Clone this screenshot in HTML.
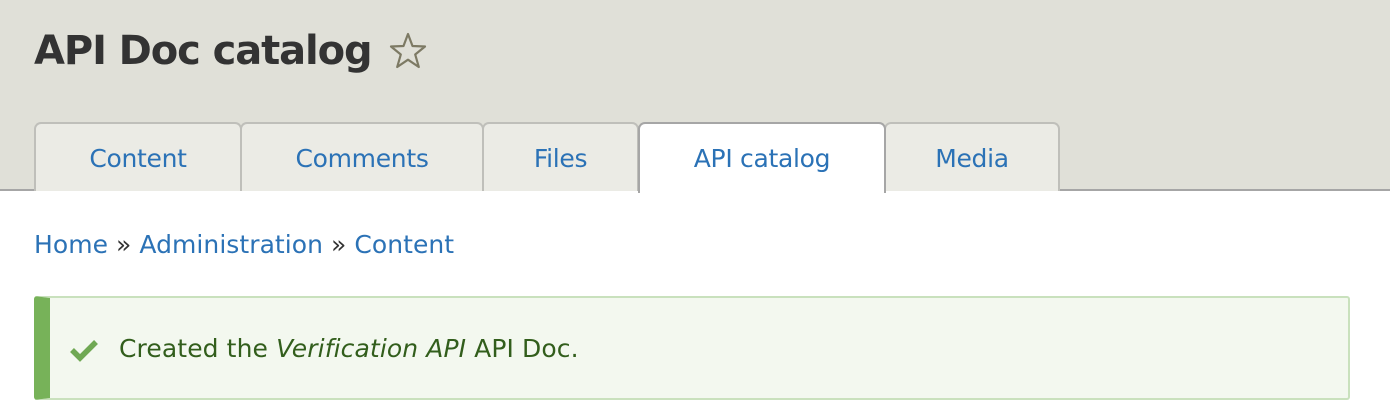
<!DOCTYPE html>
<html><head><meta charset="utf-8"><style>
*{margin:0;padding:0;box-sizing:border-box}
body{width:1390px;height:420px;background:#fff;font-family:"DejaVu Sans","Liberation Sans",sans-serif;position:relative;overflow:hidden}
.hdr{position:absolute;left:0;top:0;width:1390px;height:191px;background:#e0e0d8;border-bottom:2px solid #a6a6a6}
h1{position:absolute;left:34px;top:26px;font-size:40px;letter-spacing:-1.1px;font-weight:bold;color:#333;line-height:50px;white-space:nowrap}
.star{position:absolute;left:388px;top:31px}
.tab{position:absolute;top:122px;height:69px;background:#ebebe5;border:2px solid #bfbfba;border-bottom:none;border-radius:7px 7px 0 0;color:#2b72b6;font-size:25px;letter-spacing:-0.3px;text-align:center;line-height:70px;white-space:nowrap}
.tab.a{background:#fff;height:71px;border-color:#a6a6a6;z-index:2}
.bc{position:absolute;left:34px;top:229px;font-size:25px;letter-spacing:0.05px;color:#2b72b6;white-space:nowrap;line-height:32px}
.bc span{color:#333}
.msg{position:absolute;left:34px;top:296px;width:1316px;height:104px;background:#f3f8ef;border:2px solid #c9e1bd;border-left:16px solid #77b259;border-radius:3px}
.msg .t{position:absolute;left:69px;top:34px;font-size:25px;letter-spacing:0.1px;color:#325e1c;white-space:nowrap;line-height:34px}
.msg svg{position:absolute;left:19px;top:40px}
</style></head><body>
<div class="hdr"></div>
<h1>API Doc catalog</h1>
<svg class="star" width="40" height="40" viewBox="0 0 40 40"><path d="M20 3 L24.5 15 L37 15.5 L27.2 23.5 L30.8 36 L20 28.7 L9.2 36 L12.8 23.5 L3 15.5 L15.5 15 Z" fill="none" stroke="#7d7a64" stroke-width="2.2" stroke-linejoin="round"/></svg>
<div class="tab" style="left:34px;width:208px">Content</div>
<div class="tab" style="left:240px;width:244px">Comments</div>
<div class="tab" style="left:482px;width:157px">Files</div>
<div class="tab a" style="left:638px;width:248px">API catalog</div>
<div class="tab" style="left:884px;width:176px">Media</div>
<div class="bc">Home <span>»</span> Administration <span>»</span> Content</div>
<div class="msg">
<svg width="30" height="24" viewBox="0 0 30 24"><path d="M3 12 L11 20 L27 4" fill="none" stroke="#6fa853" stroke-width="5.5"/></svg>
<div class="t">Created the <i>Verification API</i> API Doc.</div>
</div>
</body></html>
